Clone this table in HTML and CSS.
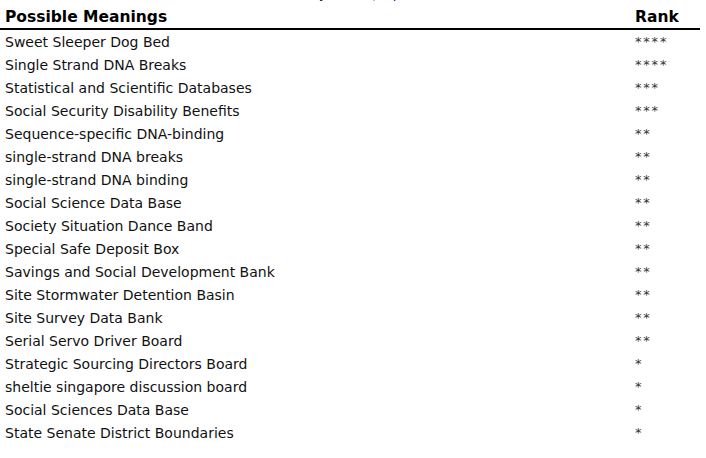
FILE: index.html
```html
<!DOCTYPE html>
<html>
<head>
<meta charset="utf-8">
<link rel="stylesheet" href="styles.css">
</head>
<body>
<div class="sort">Sort by <b>Rank</b> | <a href="#">Alpha</a></div>
<table class="meanings">
  <thead>
    <tr><th class="term">Possible Meanings</th><th class="rank">Rank</th></tr>
  </thead>
  <tbody>
    <tr><td class="term">Sweet Sleeper Dog Bed</td><td class="rank">****</td></tr>
    <tr><td class="term">Single Strand DNA Breaks</td><td class="rank">****</td></tr>
    <tr><td class="term">Statistical and Scientific Databases</td><td class="rank">***</td></tr>
    <tr><td class="term">Social Security Disability Benefits</td><td class="rank">***</td></tr>
    <tr><td class="term">Sequence-specific DNA-binding</td><td class="rank">**</td></tr>
    <tr><td class="term">single-strand DNA breaks</td><td class="rank">**</td></tr>
    <tr><td class="term">single-strand DNA binding</td><td class="rank">**</td></tr>
    <tr><td class="term">Social Science Data Base</td><td class="rank">**</td></tr>
    <tr><td class="term">Society Situation Dance Band</td><td class="rank">**</td></tr>
    <tr><td class="term">Special Safe Deposit Box</td><td class="rank">**</td></tr>
    <tr><td class="term">Savings and Social Development Bank</td><td class="rank">**</td></tr>
    <tr><td class="term">Site Stormwater Detention Basin</td><td class="rank">**</td></tr>
    <tr><td class="term">Site Survey Data Bank</td><td class="rank">**</td></tr>
    <tr><td class="term">Serial Servo Driver Board</td><td class="rank">**</td></tr>
    <tr><td class="term">Strategic Sourcing Directors Board</td><td class="rank">*</td></tr>
    <tr><td class="term">sheltie singapore discussion board</td><td class="rank">*</td></tr>
    <tr><td class="term">Social Sciences Data Base</td><td class="rank">*</td></tr>
    <tr><td class="term">State Senate District Boundaries</td><td class="rank">*</td></tr>
  </tbody>
</table>
</body>
</html>
```
FILE: styles.css
```css
html, body {
  margin: 0;
  padding: 0;
  background: #fff;
}
body {
  font-family: Verdana, "DejaVu Sans", sans-serif;
  color: #111;
  width: 706px;
  overflow: hidden;
}
.sort {
  margin-top: -13px;
  height: 14px;
  padding-left: 280px;
  font-size: 13px;
  line-height: 14px;
}
.sort a {
  color: #0000ee;
}
.meanings {
  border-collapse: collapse;
  width: 700px;
}
.meanings th {
  font-size: 15.5px;
  font-weight: bold;
  text-align: left;
  height: 25px;
  line-height: 18px;
  padding: 0 0 2px 5px;
  border-bottom: 2px solid #000;
  vertical-align: bottom;
  color: #000;
}
.meanings th.rank {
  padding-left: 0;
}
.meanings td {
  font-size: 14px;
  height: 23px;
  padding: 0 0 0 5px;
  vertical-align: middle;
}
.meanings .rank {
  width: 65px;
  padding-left: 0;
}
.meanings td.rank {
  letter-spacing: 1.8px;
  font-size: 13px;
  color: #333;
}
```
